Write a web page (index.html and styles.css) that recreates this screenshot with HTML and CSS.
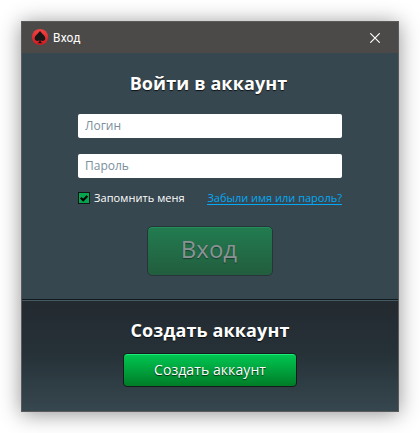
FILE: index.html
```html
<!DOCTYPE html>
<html lang="ru">
<head>
<meta charset="utf-8">
<title>Вход</title>
<link rel="stylesheet" href="styles.css">
</head>
<body>
<main class="window">
  <header class="titlebar">
    <svg class="logo" width="16" height="16" viewBox="0 0 16 16">
      <defs><linearGradient id="red" x1="0" y1="0" x2="0" y2="1"><stop offset="0" stop-color="#f04444"/><stop offset="1" stop-color="#d8181e"/></linearGradient></defs>
      <circle cx="8" cy="8" r="8" fill="url(#red)"/>
      <path d="M8 1.700C7 4.300 2.700 6.300 2.700 9.300C2.700 12.200 6.200 12.700 7.300 11C7.300 12.700 6.800 13.500 5.300 14.300H10.700C9.200 13.500 8.700 12.700 8.700 11C9.800 12.700 13.300 12.200 13.300 9.300C13.300 6.300 9 4.300 8 1.700Z" fill="#161616"/>
    </svg>
    <span class="caption">Вход</span>
    <svg class="close" width="10" height="10" viewBox="0 0 10 10"><path d="M.3 .3L9.700 9.700M9.700 .3L.3 9.700" stroke="#fff" stroke-width="1.150"/></svg>
  </header>
  <form class="login">
    <h1 class="heading heading-login">Войти в аккаунт</h1>
    <input class="field" type="text" placeholder="Логин">
    <input class="field" type="password" placeholder="Пароль">
    <div class="options">
      <label class="remember">
        <svg width="12" height="12" viewBox="0 0 12 12"><rect x=".5" y=".5" width="11" height="11" fill="#05a54f" stroke="#121517"/><path d="M2.800 5.800L5.200 8.200L9.300 4" fill="none" stroke="#000" stroke-width="2.200"/></svg>
        <span>Запомнить меня</span>
      </label>
      <a class="forgot">Забыли имя или пароль?</a>
    </div>
    <button class="submit" type="button">Вход</button>
  </form>
  <section class="signup">
    <h2 class="heading">Создать аккаунт</h2>
    <button class="create" type="button">Создать аккаунт</button>
  </section>
</main>
</body>
</html>
```
FILE: styles.css
```css
* { box-sizing: border-box; }
body {
  margin: 0;
  padding: 21px;
  height: 433px;
  overflow: hidden;
  background: #fff;
  font-family: "Open Sans", "Noto Sans", sans-serif;
}
.window {
  width: 378px;
  height: 391px;
  display: flex;
  flex-direction: column;
  border: 1px solid #5b5b5b;
  background: #37474f;
  box-shadow: 0 2px 20px rgba(0, 0, 0, .43);
}
.titlebar {
  height: 31px;
  flex: none;
  display: flex;
  align-items: center;
  padding: 0 18px 0 10px;
  background: #4c4a48;
}
.logo { margin-top: -2px; }
.caption {
  margin-left: 5px;
  color: #fff;
  font: 12px/16px Roboto, sans-serif;
  letter-spacing: .15px;
}
.close { margin-left: auto; }
.login {
  height: 246px;
  flex: none;
  display: flex;
  flex-direction: column;
  align-items: center;
  padding-top: 17px;
}
.heading {
  margin: 0;
  color: #fff;
  font-size: 18px;
  line-height: 26px;
  font-weight: 700;
  letter-spacing: .12px;
  white-space: nowrap;
  text-shadow: 0 1px 1px rgba(0, 0, 0, .75);
}
.heading-login { margin-right: 3px; }
.field {
  width: 264px;
  height: 24px;
  flex: none;
  margin: 18px 0 0;
  padding: 0 7px;
  border: 0;
  border-radius: 2px;
  background: #fff;
  font: 12px/24px "Open Sans", sans-serif;
}
.field + .field { margin-top: 16px; }
.field::placeholder { color: #78909c; opacity: 1; }
.options {
  width: 264px;
  margin-top: 12px;
  display: flex;
  justify-content: space-between;
  font-size: 11px;
  line-height: 15px;
  white-space: nowrap;
}
.remember {
  display: flex;
  align-items: center;
  gap: 4px;
  color: #fff;
  letter-spacing: .07px;
}
.forgot {
  height: 15px;
  color: #03a9f4;
  border-bottom: 1px solid #03a9f4;
}
.submit {
  width: 126px;
  height: 50px;
  margin-top: 21px;
  padding: 0 2px 4px 0;
  border: 1px solid #27343a;
  border-radius: 5px;
  color: #8b9295;
  background: linear-gradient(#227c50, #225d3e);
  box-shadow: inset 0 1px #238d5c;
  font: 24px/32px "Open Sans", sans-serif;
  text-shadow: 0 1px 1px rgba(0, 0, 0, .4);
}
.signup {
  flex: 1;
  display: flex;
  flex-direction: column;
  align-items: center;
  padding-top: 17px;
  border-top: 1px solid #12191d;
  background: linear-gradient(#232a30, #263238 50%, #37474f);
  box-shadow: inset 0 1px #455a64;
}
.create {
  width: 174px;
  height: 34px;
  margin-top: 10px;
  padding: 0;
  border: 1px solid #151b1d;
  border-radius: 4px;
  color: #fff;
  background: linear-gradient(#00c853, #007c27);
  box-shadow: inset 0 1px #19ec7a;
  font: 14px/20px "Open Sans", sans-serif;
  letter-spacing: .08px;
  text-shadow: 0 1px 1px rgba(0, 0, 0, .7);
}
```
